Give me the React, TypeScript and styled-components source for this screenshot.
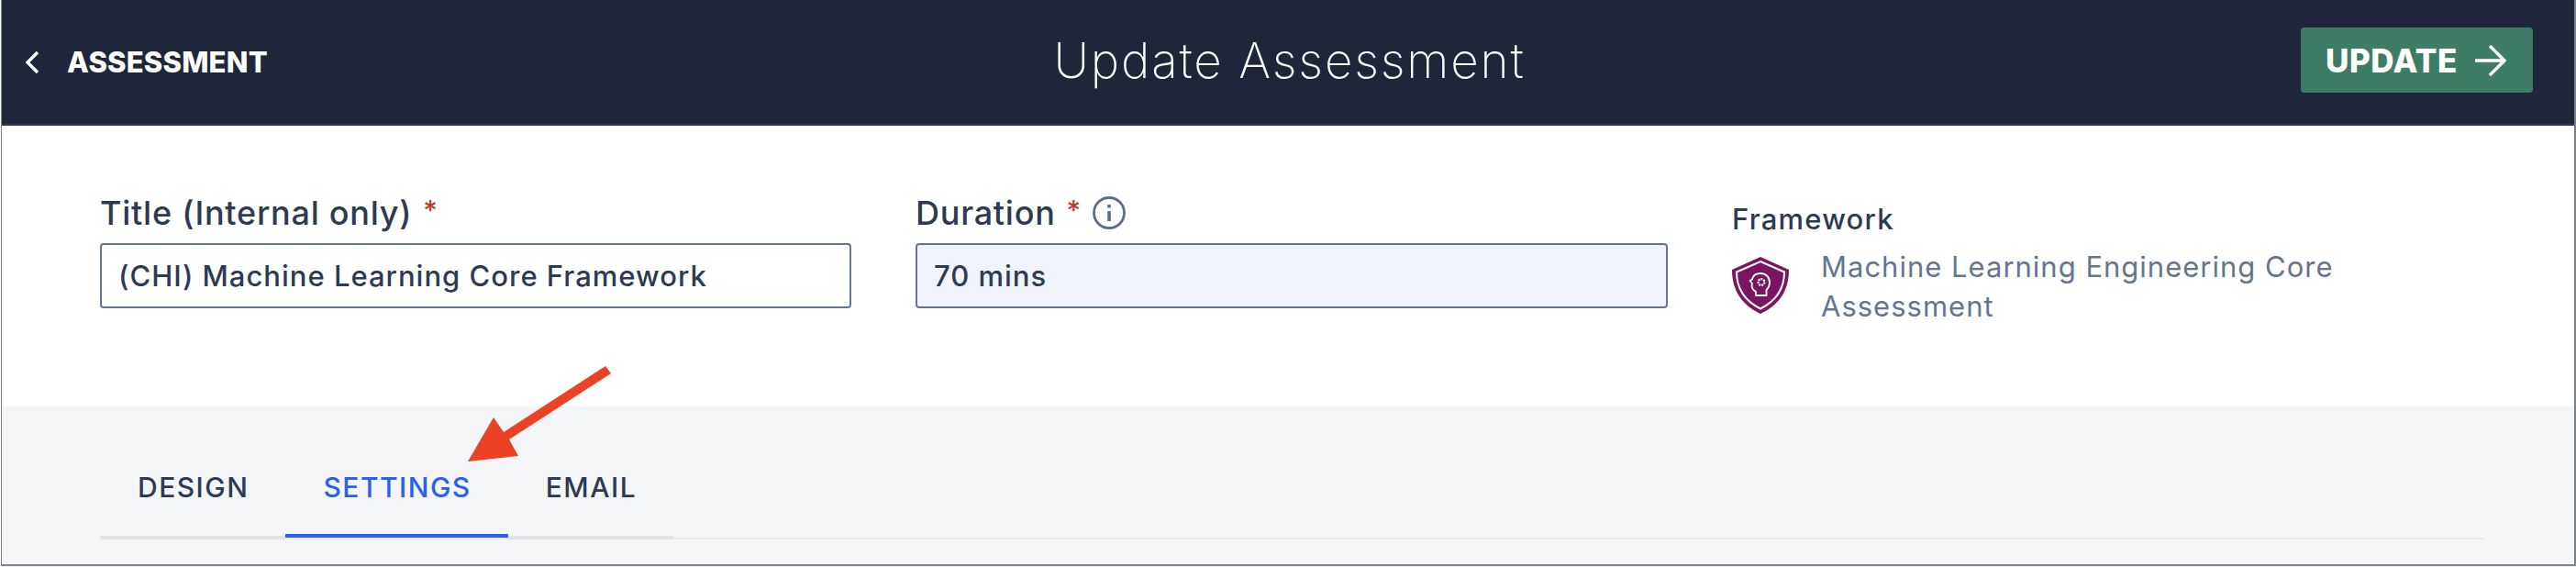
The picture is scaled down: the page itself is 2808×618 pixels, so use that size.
import React from "react";
import styled, { createGlobalStyle } from "styled-components";

const GlobalStyle = createGlobalStyle`
  html, body {
    margin: 0;
    padding: 0;
    background: #ffffff;
  }
  * {
    box-sizing: border-box;
  }
`;

const Frame = styled.div`
  position: relative;
  width: 2807px;
  height: 617px;
  margin-left: 1px;
  border: solid #7c7f85;
  border-width: 0 2px 2px 1px;
  overflow: hidden;
  font-family: Inter, "Open Sans", sans-serif;
  color: #2d3a52;
  display: flex;
  flex-direction: column;
`;

const Header = styled.header`
  height: 137px;
  flex: none;
  background: #202639;
  border-bottom: 2px solid #2f3653;
  display: grid;
  grid-template-columns: 1fr auto 1fr;
  align-items: center;
  padding: 0 45px 0 48px;
`;

const BackLink = styled.a`
  display: flex;
  align-items: center;
  gap: 30px;
  margin-left: -23px;
  color: #ffffff;
  font-size: 31px;
  font-weight: 800;
  letter-spacing: 0.2px;
`;

const PageTitle = styled.h1`
  margin: -3px 0 0;
  color: #ffffff;
  font-size: 53px;
  font-weight: 200;
  letter-spacing: 1.8px;
`;

const UpdateButton = styled.button`
  justify-self: end;
  width: 253px;
  height: 71px;
  margin-top: -4px;
  padding: 0 0 0 27px;
  display: flex;
  align-items: center;
  gap: 19px;
  background: #3e7c66;
  color: #ffffff;
  border: 0;
  border-radius: 4px;
  font-family: inherit;
  font-size: 35px;
  font-weight: 800;
  letter-spacing: 0.5px;
`;

const FormSection = styled.section`
  height: 306px;
  flex: none;
  background: #ffffff;
  display: grid;
  grid-template-columns: 819px 820px 1fr;
  column-gap: 70px;
  padding: 69px 100px 0 107px;
`;

const FieldGroup = styled.div`
  display: flex;
  flex-direction: column;
`;

const FieldLabel = styled.label`
  display: flex;
  align-items: center;
  height: 52px;
  margin-bottom: 7px;
  font-size: 36px;
  font-weight: 500;
  letter-spacing: 0.75px;
  gap: 12px;
`;

const Required = styled.span`
  color: #c0392b;
  font-size: 30px;
  margin-top: -6px;
`;

const TextBox = styled.div<{ $filled?: boolean }>`
  height: 71px;
  display: flex;
  align-items: center;
  padding: 0 18px;
  background: ${(p) => (p.$filled ? "#f0f3fb" : "#ffffff")};
  border: 2px solid #66758f;
  border-radius: 4px;
  font-size: 31px;
  font-weight: 500;
  letter-spacing: 1px;
`;

const FrameworkLabel = styled.div`
  font-size: 31px;
  font-weight: 500;
  letter-spacing: 1.2px;
  height: 44px;
  margin-top: 11px;
  line-height: 44px;
`;

const FrameworkRow = styled.div`
  display: flex;
  gap: 35px;
  align-items: center;
  margin-top: 6px;
`;

const FrameworkName = styled.div`
  color: #65758f;
  font-size: 31px;
  line-height: 43px;
  letter-spacing: 1px;
  width: 620px;
  padding-top: 2px;
`;

const TabsSection = styled.section`
  flex: 1;
  background: #f4f5f7;
  padding: 0 98px 0 107px;
`;

const TabBar = styled.nav`
  display: flex;
  height: 145px;
  border-bottom: 2px solid #e9eaec;
`;

const Tab = styled.a<{ $active?: boolean }>`
  position: relative;
  display: flex;
  align-items: center;
  height: 145px;
  padding: 35px 40px 0 41px;
  border-bottom: 4px solid #e3e4e6;
  font-size: 30px;
  font-weight: 500;
  letter-spacing: 1.5px;
  color: ${(p) => (p.$active ? "#2b5ff2" : "#2d3a52")};

  &::after {
    content: "";
    display: ${(p) => (p.$active ? "block" : "none")};
    position: absolute;
    left: 0;
    right: 0;
    bottom: -2px;
    height: 4px;
    background: #2b5ff2;
  }
`;

const CalloutArrow = styled.svg`
  position: absolute;
  left: 0;
  top: 0;
  pointer-events: none;
`;

const ShieldIcon = () => (
  <svg width="62" height="62" viewBox="0 0 62 62" style={{ flex: "none" }}>
    <path d="M31 0 L62 14 C62 36 52 52 31 62 C10 52 0 36 0 14 Z" fill="#7a1562" />
    <path
      d="M31 5 L57 16.5 C57 35 48 48 31 56.5 C14 48 5 35 5 16.5 Z"
      fill="none"
      stroke="#ffffff"
      strokeWidth="2"
    />
    <path
      d="M26 42 V38 C22 35.5 21 32 22 29 L19.5 26 L22 24.5 C23 19.5 27 18 31 18 C37 18 41 22 41 28 C41 32 39.5 34 37.5 36 V42 Z"
      fill="none"
      stroke="#ffffff"
      strokeWidth="1.8"
      strokeLinejoin="round"
    />
    <circle cx="32" cy="27.5" r="3.4" fill="none" stroke="#ffffff" strokeWidth="2.2" strokeDasharray="2 1" />
  </svg>
);

const App = () => {
  return (
    <>
      <GlobalStyle />
      <Frame>
        <Header>
          <BackLink>
            <svg width="16" height="26" viewBox="0 0 16 26" fill="none" stroke="#ffffff" strokeWidth="3.4">
              <path d="M14 2 L3 13 L14 24" />
            </svg>
            ASSESSMENT
          </BackLink>
          <PageTitle>Update Assessment</PageTitle>
          <UpdateButton>
            UPDATE
            <svg width="34" height="34" viewBox="0 0 34 34" fill="none" stroke="#ffffff" strokeWidth="3.4">
              <path d="M0 17 H32 M16 1 L32 17 L16 33" />
            </svg>
          </UpdateButton>
        </Header>
        <FormSection>
          <FieldGroup>
            <FieldLabel>
              Title (Internal only) <Required>*</Required>
            </FieldLabel>
            <TextBox>(CHI) Machine Learning Core Framework</TextBox>
          </FieldGroup>
          <FieldGroup>
            <FieldLabel>
              Duration <Required>*</Required>
              <svg width="36" height="36" viewBox="0 0 36 36" fill="none" stroke="#5d6d85" strokeWidth="2.8">
                <circle cx="18" cy="18" r="16.5" />
                <path d="M18 16 V27" strokeWidth="3.6" />
                <path d="M18 9 V12.5" strokeWidth="3.6" />
              </svg>
            </FieldLabel>
            <TextBox $filled>70 mins</TextBox>
          </FieldGroup>
          <FieldGroup>
            <FrameworkLabel>Framework</FrameworkLabel>
            <FrameworkRow>
              <ShieldIcon />
              <FrameworkName>Machine Learning Engineering Core Assessment</FrameworkName>
            </FrameworkRow>
          </FieldGroup>
        </FormSection>
        <TabsSection>
          <TabBar>
            <Tab>DESIGN</Tab>
            <Tab $active>SETTINGS</Tab>
            <Tab>EMAIL</Tab>
          </TabBar>
        </TabsSection>
        <CalloutArrow width="2804" height="615" viewBox="2 0 2804 615">
          <polygon
            points="510,503 538,455 549,471 660,399 666,407 555,479 565,497"
            fill="#eb4125"
          />
        </CalloutArrow>
      </Frame>
    </>
  );
};

export default App;
